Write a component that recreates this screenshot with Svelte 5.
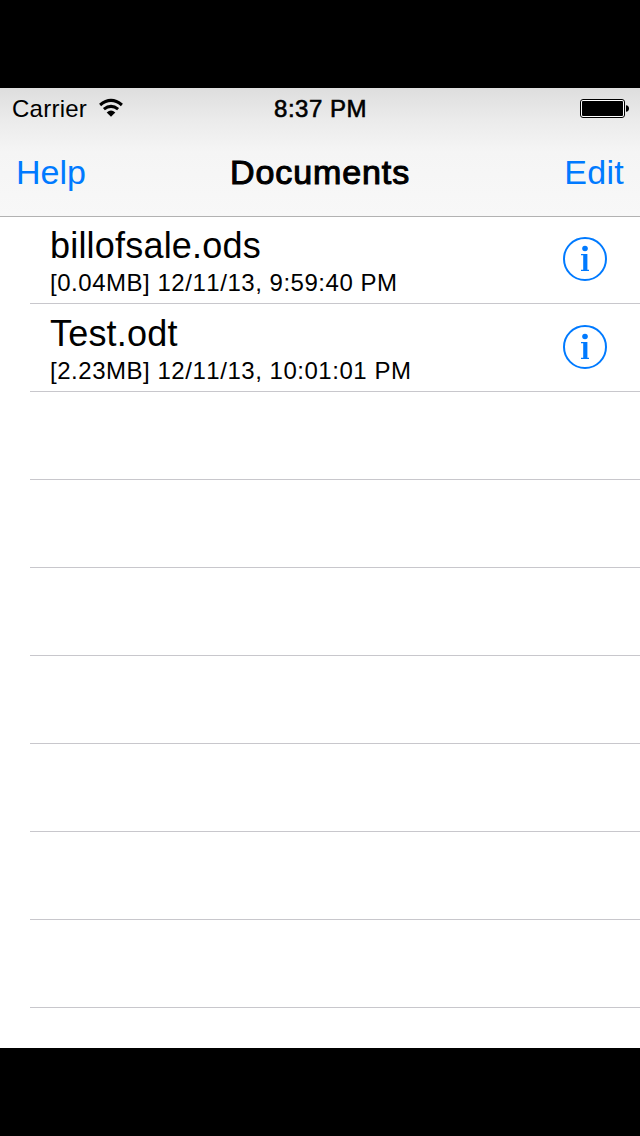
<script lang="ts">
  type Doc = { name: string; size: string; modified: string };

  const documents: Doc[] = [
    { name: 'billofsale.ods', size: '0.04MB', modified: '12/11/13, 9:59:40 PM' },
    { name: 'Test.odt', size: '2.23MB', modified: '12/11/13, 10:01:01 PM' },
  ];

  // the table keeps drawing separators below the last document
  const emptyRows = Array.from({ length: 7 });
</script>

<div class="device">
  <main class="screen">
    <header>
      <div class="status-bar">
        <div class="carrier">
          <span>Carrier</span>
          <svg width="26" height="20" viewBox="0 0 26 20" aria-hidden="true">
            <g fill="none" stroke="#000" stroke-width="3.1">
              <path d="M2.1 7Q13-2.2 23.9 7" />
              <path d="M5.9 11.1Q13 5.5 20.1 11.1" />
            </g>
            <path d="M8.7 14.4Q13 10.8 17.3 14.4L13 18.8Z" />
          </svg>
        </div>
        <time>8:37 PM</time>
        <svg class="battery" width="50" height="20" viewBox="0 0 50 20" aria-hidden="true">
          <rect x=".5" y=".5" width="44" height="18" rx="2.5" fill="#fff" stroke="#000" />
          <rect x="2" y="2" width="41" height="15" rx="1" />
          <path d="M46 6.2Q49 6.5 49 9.5T46 12.8Z" />
        </svg>
      </div>
      <nav>
        <button type="button">Help</button>
        <h1>Documents</h1>
        <button type="button" class="edit">Edit</button>
      </nav>
    </header>

    <ul>
      {#each documents as doc}
        <li>
          <div class="text">
            <span class="name">{doc.name}</span>
            <span class="detail">[{doc.size}] {doc.modified}</span>
          </div>
          <button type="button" class="info" aria-label="Info">
            <svg width="44" height="44" viewBox="0 0 44 44">
              <circle cx="22" cy="22" r="21" fill="none" stroke="currentColor" stroke-width="2" />
              <circle cx="22" cy="11.5" r="2.8" fill="currentColor" />
              <path d="M18 17H24.4V32.7H26V34H18V32.7H20.2V18.3H18Z" fill="currentColor" />
            </svg>
          </button>
        </li>
      {/each}
      {#each emptyRows as _}
        <li></li>
      {/each}
    </ul>
  </main>
</div>

<style>
  :global(body) {
    background: #000;
  }
  .device {
    box-sizing: border-box;
    width: 640px;
    height: 1136px;
    padding: 88px 0;
    background: #000;
    font-family: 'Liberation Sans', Arial, sans-serif;
    color: #000;
  }
  .screen {
    height: 960px;
    overflow: hidden;
    background: #fff;
  }
  header {
    box-sizing: border-box;
    height: 129px;
    border-bottom: 1px solid #b2b2b2;
    background: linear-gradient(#dedede, #ebebeb 25%, #f5f5f5 50%, #f8f8f8);
  }
  .status-bar {
    display: grid;
    grid-template-columns: 1fr auto 1fr;
    align-items: start;
    height: 40px;
    padding: 0 11px 0 12px;
    font-size: 24px;
    line-height: 42px;
  }
  .carrier {
    display: flex;
    gap: 10.5px;
    letter-spacing: 0.25px;
  }
  .carrier svg {
    margin-top: 10px;
  }
  time {
    letter-spacing: 0.5px;
    -webkit-text-stroke: 0.6px #000;
  }
  .battery {
    justify-self: end;
    margin: 11px -1px 0 0;
  }
  nav {
    display: grid;
    grid-template-columns: 1fr auto 1fr;
    height: 88px;
    padding: 0 16px;
    font-size: 34px;
    line-height: 88px;
  }
  button {
    padding: 0;
    border: 0;
    background: none;
    color: #007aff;
    font: inherit;
    text-align: left;
    cursor: pointer;
  }
  .edit {
    letter-spacing: 0.3px;
    text-align: right;
  }
  h1 {
    margin: 0;
    font-size: 34px;
    font-weight: 400;
    letter-spacing: 0.9px;
    -webkit-text-stroke: 1.1px #000;
  }
  ul {
    margin: 0;
    padding: 0;
    list-style: none;
  }
  li {
    box-sizing: border-box;
    display: flex;
    justify-content: space-between;
    height: 88px;
    margin-left: 30px;
    padding: 0 33px 0 20px;
    border-bottom: 1px solid #c8c7cc;
  }
  /* the header border takes the first pixel of this row */
  li:first-child {
    height: 87px;
  }
  .text {
    display: flex;
    flex-direction: column;
    justify-content: flex-end;
    padding-bottom: 5px;
  }
  .name {
    margin-bottom: 1px;
    font-size: 36px;
    line-height: 42px;
    letter-spacing: 0.2px;
  }
  .detail {
    font-size: 24px;
    line-height: 30px;
    letter-spacing: 0.53px;
    font-kerning: none;
  }
  .info {
    align-self: flex-end;
    height: 44px;
    margin-bottom: 22px;
  }
  .info svg {
    display: block;
  }
</style>
